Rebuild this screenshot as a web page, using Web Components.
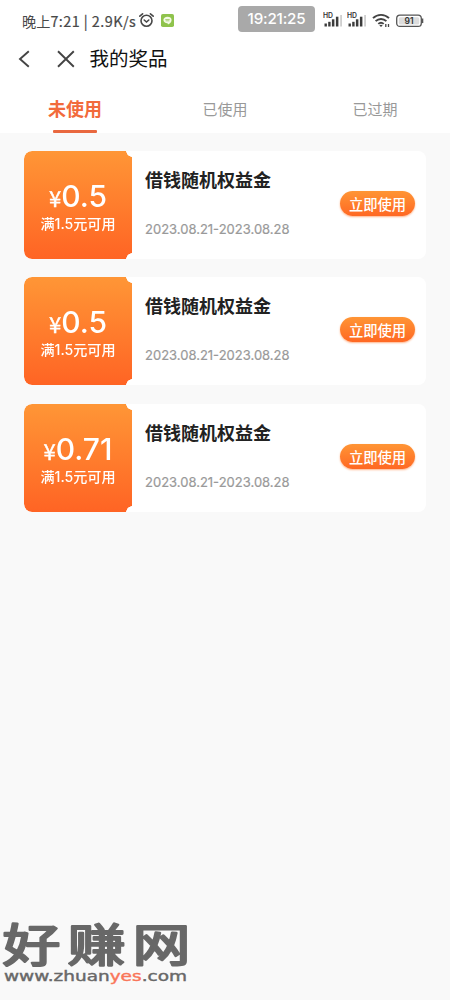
<!DOCTYPE html>
<html lang="zh-CN">
<head>
<meta charset="utf-8">
<title>我的奖品</title>
<style>
html,body{margin:0;height:100%;background:#f9f9f9}
body{font-family:Inter,"Noto Sans CJK SC",sans-serif;overflow:hidden}
</style>
</head>
<body>
<prize-page></prize-page>
<script>
const define = (name, html) => {
  const t = document.createElement('template');
  t.innerHTML = html;
  customElements.define(name, class extends HTMLElement {
    constructor() {
      super();
      this.attachShadow({mode: 'open'}).append(t.content.cloneNode(true));
    }
  });
};

define('signal-bars', `
<style>:host{display:block;width:20px;height:16px}svg{display:block}</style>
<svg width="20" height="16" viewBox="0 0 20 16"><text x="0" y="6.2" font-family="Inter" font-weight="600" font-size="7" textLength="10" lengthAdjust="spacingAndGlyphs" fill="#333">HD</text>
<g fill="#3c3c3c"><rect x="1.5" y="11.5" width="2.4" height="3"/><rect x="5.2" y="9.8" width="2.4" height="4.7"/><rect x="8.9" y="7.3" width="2.5" height="7.2"/><rect x="12.9" y="4.7" width="2.5" height="9.8"/><rect x="17.4" y="3" width="1.3" height="11.5" fill="#bbb"/></g></svg>`);

define('status-bar', `
<style>
:host{display:flex;align-items:center;height:40px;box-sizing:border-box;padding:0 25px 0 22px;color:#484848}
.t{font-family:"Noto Sans CJK SC",sans-serif;font-size:14.2px;line-height:20px;white-space:pre;width:115px;flex:none}
.t b{font:400 14.4px "Noto Sans CJK SC",sans-serif;letter-spacing:.45px;-webkit-text-stroke:.2px #484848}
svg{display:block;flex:none}
.clock{margin-left:64px;margin-top:-3px;width:77px;height:26px;border-radius:4px;background:#a9a9a9;color:#fff;font:500 15.2px/26px Inter,sans-serif;text-align:center;flex:none;letter-spacing:-.2px}
signal-bars{flex:none}
</style>
<span class="t">晚上<b>7:21 | 2.9K/s</b></span>
<svg style="margin-left:1px" width="17" height="16" viewBox="0 0 17 16" fill="none" stroke="#484848" stroke-width="1.6" stroke-linecap="round"><circle cx="8.5" cy="8.7" r="5.5"/><path d="M1.8 4.2 4.6 1.8M12.4 1.8l2.8 2.4M6.2 8l2.3 2 2.3-2"/></svg>
<svg style="margin-left:6px" width="13" height="13" viewBox="0 0 13 13"><rect width="13" height="13" rx="1.8" fill="#8fc34c"/><path d="M6.5 2.8c-2.4 0-4.1 1.4-4.1 3.2S4.1 9.2 6.5 9.2L7 10.6C9 9.5 10.6 8 10.6 6S8.9 2.8 6.5 2.8z" fill="#f3fae5"/><path d="M4.3 5.5h4.4M4.6 6.8h3.8" stroke="#8fc34c" stroke-width=".7"/></svg>
<span class="clock">19:21:25</span>
<signal-bars style="margin-left:8px"></signal-bars>
<signal-bars style="margin-left:4px"></signal-bars>
<svg style="margin-left:5px" width="19" height="15" viewBox="0 0 19 15" fill="none" stroke="#444" stroke-width="1.9"><path d="M1 5.2C5.5 .7 12.5 .7 17 5.2M3.6 8.2c3-3 7.8-3 10.8 0M6.3 10.9c1.6-1.5 3.8-1.5 5.4 0"/><path d="M7.3 12.3 9 14l1.7-1.7C9.7 11.5 8.3 11.5 7.3 12.3z" fill="#444" stroke="none"/><path d="M13.8 11v3M16.5 11v3" stroke-width="1.3"/></svg>
<svg style="margin-left:5px;margin-top:1px" width="29" height="14" viewBox="0 0 29 14"><rect x=".7" y="1.2" width="24.6" height="11.2" rx="3.2" fill="#fff" stroke="#555" stroke-width="1.3"/><rect x="2.8" y="3.2" width="20.4" height="7.2" rx="1.5" fill="#ddd"/><path d="M26.5 4.5v4.6" stroke="#555" stroke-width="1.6"/><text x="13" y="10" text-anchor="middle" font-family="Inter" font-weight="600" font-size="8.5" fill="#333">91</text></svg>`);

define('nav-bar', `
<style>
:host{display:flex;align-items:center;height:38px;padding-left:17px;color:#111}
svg{display:block}
h1{margin:0 0 0 14.5px;font-size:19.5px;line-height:28px;font-weight:400}
</style>
<svg width="14" height="18" viewBox="0 0 14 18" fill="none" stroke="#444" stroke-width="1.9"><path d="M11.8 1.2 3 9l8.8 7.8"/></svg>
<svg style="margin-left:26px" width="18" height="18" viewBox="0 0 18 18" fill="none" stroke="#444" stroke-width="1.9"><path d="m1 1.2 15.8 15.6M16.8 1.2 1 16.8"/></svg>
<h1><slot></slot></h1>`);

define('tab-item', `
<style>
:host{flex:1;display:flex;flex-direction:column;align-items:center;justify-content:flex-end;height:55px;font-size:15px;color:#999}
span{line-height:24px;margin-bottom:8px}
i{display:block;width:44px;height:3px;border-radius:1px}
:host([active]){color:#f26a3b;font-size:18px;font-weight:700}
:host([active]) i{background:#e9683f}
</style><span><slot></slot></span><i></i>`);

define('tab-bar', `<style>:host{display:flex}</style><slot></slot>`);

define('use-button', `
<style>
:host{display:block;width:75px;height:25px;border-radius:13px;background:linear-gradient(#ff9535,#ff6823);box-shadow:0 1px 2px #ffb48a;color:#fff;font-size:14.3px;line-height:27px;font-weight:500;text-align:center;flex:none}
</style><slot></slot>`);

define('coupon-card', `
<style>
:host{display:flex;height:108px;border-radius:8px;background:#fff}
.left{width:108px;box-sizing:border-box;padding-top:26px;color:#fff;text-align:center;border-radius:8px 0 0 8px;background:linear-gradient(#ff9636,#ff6424);
-webkit-mask:radial-gradient(circle at 108px 0,#0000 5.5px,#000 6px) 0 0/100% 54px no-repeat,radial-gradient(circle at 108px 54px,#0000 5.5px,#000 6px) 0 54px/100% 54px no-repeat}
.price{height:38px;line-height:38px;font-size:30px;font-weight:500;white-space:nowrap}
.price small{font:400 22px "Noto Sans CJK SC",sans-serif;-webkit-text-stroke:.4px #fff}
.rule{font-size:14.1px;line-height:18px;font-weight:500;white-space:nowrap}
.info{flex:1;padding:16px 0 0 13px}
h2{margin:0;font-size:18px;line-height:28px;font-weight:700;color:#222}
p{margin:24px 0 0;font-size:13px;line-height:20px;color:#999;white-space:nowrap;-webkit-text-stroke:.2px #999}
use-button{margin:40px 11px 0 0}
</style>
<div class="left"><div class="price"><small>¥</small><slot name="price"></slot></div><div class="rule"><slot name="rule"></slot></div></div>
<div class="info"><h2><slot></slot></h2><p><slot name="date"></slot></p></div>
<use-button>立即使用</use-button>`);

define('site-mark', `
<style>:host{position:absolute;left:0;bottom:0;width:200px;height:100px}svg{display:block;overflow:visible}</style>
<svg width="200" height="100" viewBox="0 0 200 100" fill="#686868">
<text transform="translate(2.5 62) scale(1 .79)" font-family="Liberation Sans,Noto Sans CJK SC" font-weight="400" font-size="58" textLength="188" lengthAdjust="spacing" stroke="#686868" stroke-width="2.8" stroke-linejoin="round">好赚网</text>
<text x="4" y="81" font-family="DejaVu Sans" font-size="13.5" textLength="183" lengthAdjust="spacingAndGlyphs" stroke="#686868" stroke-width=".4">www.zhuan<tspan fill="#f9765a" stroke="#f9765a">yes</tspan>.com</text>
</svg>`);

define('prize-page', `
<style>
:host{display:block;position:relative;height:1000px;width:450px;background:#f9f9f9}
header{background:#fff;height:133px}
main{display:grid;gap:18.5px;padding:17.5px 24px 0}
</style>
<header>
<status-bar></status-bar>
<nav-bar>我的奖品</nav-bar>
<tab-bar><tab-item active>未使用</tab-item><tab-item>已使用</tab-item><tab-item>已过期</tab-item></tab-bar>
</header>
<main>
<coupon-card>借钱随机权益金<span slot="price">0.5</span><span slot="rule">满1.5元可用</span><span slot="date">2023.08.21-2023.08.28</span></coupon-card>
<coupon-card>借钱随机权益金<span slot="price">0.5</span><span slot="rule">满1.5元可用</span><span slot="date">2023.08.21-2023.08.28</span></coupon-card>
<coupon-card>借钱随机权益金<span slot="price">0.71</span><span slot="rule">满1.5元可用</span><span slot="date">2023.08.21-2023.08.28</span></coupon-card>
</main>
<site-mark></site-mark>`);
</script>
</body>
</html>
